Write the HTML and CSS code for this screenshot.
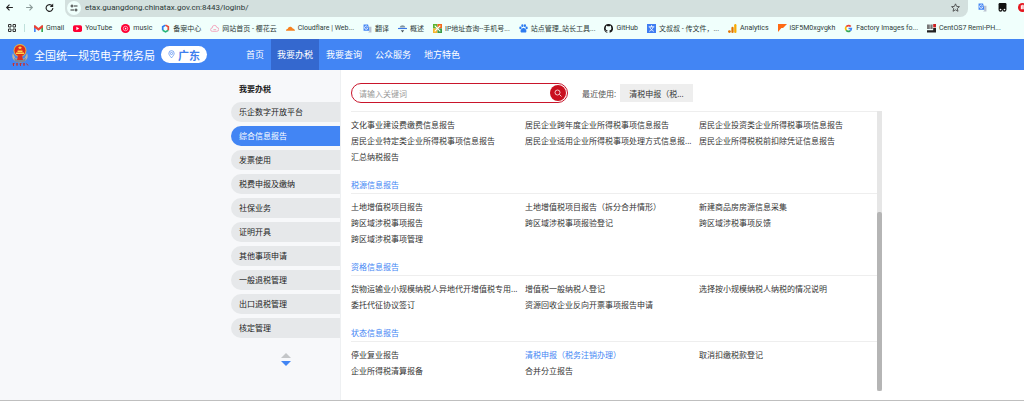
FILE: index.html
```html
<!DOCTYPE html>
<html lang="zh-CN">
<head>
    <meta charset="UTF-8">
    <meta name="viewport" content="width=device-width, initial-scale=1.0">
    <title>全国统一规范电子税务局</title>
    <link rel="stylesheet" href="styles.css">
</head>
<body>

    <!-- 浏览器地址栏 -->
    <div class="toolbar">
        <button class="icon-btn" aria-label="后退"><svg viewBox="0 0 16 16"><path d="M14 8H3M8 3L3 8l5 5" fill="none" stroke="#222" stroke-width="2"/></svg></button>
        <button class="icon-btn" aria-label="前进"><svg viewBox="0 0 16 16"><path d="M2 8h11M8 3l5 5-5 5" fill="none" stroke="#8a9a98" stroke-width="2"/></svg></button>
        <button class="icon-btn" aria-label="刷新"><svg viewBox="0 0 16 16"><path d="M13 5.500A6 6 0 1 0 14 9" fill="none" stroke="#222" stroke-width="2"/><path d="M14.500 1v6h-6z" fill="#222"/></svg></button>
        <div class="omnibox">
            <button class="site-info" aria-label="网站信息"><svg viewBox="0 0 16 16"><g fill="none" stroke="#333" stroke-width="2"><circle cx="4" cy="4" r="2"/><path d="M8 4h7M1 12h7"/><circle cx="12" cy="12" r="2"/></g></svg></button>
            <input class="url" type="text" aria-label="地址" value="etax.guangdong.chinatax.gov.cn:8443/loginb/">
            <button class="icon-btn" aria-label="收藏"><svg viewBox="0 0 16 16"><path d="M8 1.500l2 4.500 5 .500-3.800 3.300 1.200 4.900L8 12.100l-4.400 2.600 1.200-4.900L1 6.500 6 6z" fill="none" stroke="#444" stroke-width="1.500"/></svg></button>
        </div>
        <div class="extensions">
            <svg viewBox="0 0 16 16"><path d="M1 1h8l3 11H1z" fill="#4285f4"/><path d="M10 5h5v10H9l3-3z" fill="#b9c1d0"/><path d="M8 4.500a3 3 0 1 0 0 4V7H6" fill="none" stroke="#fff" stroke-width="1.500"/></svg>
            <svg viewBox="0 0 16 16"><rect x="1" width="14" height="12" rx="2" fill="#111"/><circle cx="4.500" cy="12" r="3.500" fill="#111"/><circle cx="11.500" cy="12" r="3.500" fill="#111"/><circle cx="4.500" cy="11.500" r="1.500" fill="#fff"/><circle cx="11.500" cy="11.500" r="1.500" fill="#fff"/></svg>
            <svg viewBox="0 0 16 16"><circle cx="8" cy="8" r="8" fill="#e5171f"/><path d="M6 4v7M8.500 3v8M11 4v7" stroke="#fff" stroke-width="2"/></svg>
        </div>
    </div>

    <!-- 书签栏 -->
    <nav class="bookmarks">
        <button class="icon-btn apps" aria-label="应用"><svg viewBox="0 0 16 16"><path d="M1 1h5v5H1zM10 1h5v5h-5zM1 10h5v5H1zM10 10h5v5h-5z" fill="none" stroke="#333" stroke-width="2"/></svg></button>
        <a href="#"><svg viewBox="0 0 16 16"><path d="M0 3h3v11H0z" fill="#4285f4"/><path d="M13 3h3v11h-3z" fill="#34a853"/><path d="M0 2h2l6 5 6-5h2v4l-8 6-8-6z" fill="#ea4335"/></svg>Gmail</a>
        <a href="#"><svg viewBox="0 0 16 16"><rect y="2" width="16" height="12" rx="3" fill="#f03"/><path d="M6 5l5 3-5 3z" fill="#fff"/></svg>YouTube</a>
        <a href="#"><svg viewBox="0 0 16 16"><circle cx="8" cy="8" r="8" fill="#f03"/><circle cx="8" cy="8" r="4" fill="none" stroke="#fff"/><path d="M7 6l3 2-3 2z" fill="#fff"/></svg>music</a>
        <a href="#"><svg viewBox="0 0 16 16"><g fill="none" stroke-width="3"><path d="M8 2L3 5v6" stroke="#2d7ff0"/><path d="M3 11l5 3 5-3" stroke="#27b67a"/><path d="M13 11V5L8 2" stroke="#e84b3c"/></g></svg>备案中心</a>
        <a href="#"><svg viewBox="0 0 16 16"><path d="M4 13a3 3 0 0 1 0-6 4 4 0 0 1 8-1 3.500 3.500 0 0 1 0 7zM6 10h5" fill="none" stroke="#f39ab5" stroke-width="1.500"/></svg>网站首页 - 樱花云</a>
        <a href="#"><svg viewBox="0 0 16 16"><path d="M0 12c0-2 1-3 3-3 0-5 7-6 9-1 2 0 4 2 4 4z" fill="#f6821f"/></svg>Cloudflare | Web...</a>
        <a href="#"><svg viewBox="0 0 16 16"><path d="M1 1h8l3 11H1z" fill="#4285f4"/><path d="M10 5h5v10H9l3-3z" fill="#b9c1d0"/><path d="M8 4.500a3 3 0 1 0 0 4V7H6" fill="none" stroke="#fff" stroke-width="1.500"/></svg>翻译</a>
        <a href="#"><svg viewBox="0 0 16 16"><path d="M3 6c1-5 9-5 10 0z" fill="#8295a0"/><path d="M0 8h16" stroke="#3b78e7" stroke-width="2"/><path d="M5 11h6l-3 4z" fill="#44525c"/></svg>概述</a>
        <a href="#"><svg viewBox="0 0 16 16"><path d="M0 0h8v8H0z" fill="#5bb531"/><path d="M8 0h8v8H8z" fill="#f36a1d"/><path d="M0 8h8v8H0z" fill="#f7b52b"/><path d="M8 8h8v8H8z" fill="#3c9c49"/><path d="M3 3l10 10M13 3L3 13" stroke="#fff" stroke-width="2"/></svg>IP地址查询--手机号...</a>
        <a href="#"><svg viewBox="0 0 16 16"><g fill="#2e7cf0"><ellipse cx="2.500" cy="7" rx="2" ry="2.500"/><ellipse cx="6" cy="3" rx="2" ry="2.500"/><ellipse cx="10.500" cy="3" rx="2" ry="2.500"/><ellipse cx="13.500" cy="7" rx="2" ry="2.500"/><path d="M8 7c3 0 6 4 5 7-1 2-3 1-5 1s-4 1-5-1c-1-3 2-7 5-7z"/></g></svg>站点管理_站长工具...</a>
        <a href="#"><svg viewBox="0 0 16 16"><path fill="#181717" d="M8 0C3.580 0 0 3.580 0 8c0 3.540 2.290 6.530 5.470 7.590.4.070.550-.170.550-.380v-1.490c-2.230.480-2.700-.950-2.700-.950-.360-.920-.890-1.170-.890-1.170-.730-.500.060-.490.060-.490.800.060 1.230.830 1.230.830.710 1.220 1.870.870 2.330.660.070-.520.280-.870.510-1.070-1.780-.200-3.640-.890-3.640-3.950 0-.870.310-1.590.820-2.150-.080-.200-.360-1.020.080-2.120 0 0 .670-.210 2.200.820a7.600 7.600 0 0 1 4 0c1.530-1.040 2.200-.820 2.200-.820.440 1.100.160 1.920.080 2.120.510.560.820 1.270.820 2.150 0 3.070-1.870 3.750-3.650 3.950.290.250.540.730.540 1.480v2.200c0 .210.150.460.550.380A8 8 0 0 0 8 0z"/></svg>GitHub</a>
        <a href="#"><svg viewBox="0 0 16 16"><path d="M0 0h16v16H0z" fill="#3f7df2"/><path d="M3 5h10M8 2v3M5 5c1 4 3 6 7 8M11 5c-1 4-3 6-7 8" fill="none" stroke="#fff" stroke-width="1.500"/></svg>文叔叔 - 传文件，...</a>
        <a href="#"><svg viewBox="0 0 16 16"><rect x="11" width="4" height="16" rx="2" fill="#f9ab00"/><rect x="6" y="5" width="4" height="11" rx="2" fill="#e37400"/><circle cx="2.500" cy="13.500" r="2.500" fill="#e37400"/></svg>Analytics</a>
        <a href="#"><svg viewBox="0 0 16 16"><path d="M0 0h16L9 7H6l-6 7z" fill="#ff6a13"/></svg>iSF5M0xgvgkh</a>
        <a href="#"><svg viewBox="0 0 16 16"><g fill="none" stroke-width="3"><path d="M12 4.500A5 5 0 0 0 4 5" stroke="#ea4335"/><path d="M4 5a5 5 0 0 0 0 6" stroke="#fbbc05"/><path d="M4 11a5 5 0 0 0 7 1" stroke="#34a853"/><path d="M11 12a5 5 0 0 0 2-4H8" stroke="#4285f4"/></g></svg>Factory Images fo...</a>
        <a href="#"><svg viewBox="0 0 16 16"><path d="M0 1h5v8H0zM6 1h4v8H6z" fill="#777"/><path d="M11 0h5v6h-5z" fill="#c22"/><path d="M0 11h16v4H0zM11 7h5v4h-5z" fill="#222"/></svg>CentOS7 Remi-PH...</a>
    </nav>

    <header class="site-header">
        <svg class="emblem" viewBox="0 0 36 48">
            <path d="M4 20c-4 8 0 18 14 19 14-1 18-11 14-19l-5 11H9z" fill="#b9b3a4"/>
            <path d="M6 30q12 8 24 0l-2 7q-10 4-20 0z" fill="#7c8797"/>
            <circle cx="18" cy="15" r="13" fill="#e8b23c"/>
            <circle cx="18" cy="15" r="11" fill="#dc2a1e"/>
            <path d="M18 5l1 3h3l-2 2 1 3-3-2-3 2 1-3-2-2h3zM10 19h16v3H10zM13 15h10v3H13z" fill="#ffd54a"/>
            <path d="M14 25h8l2 9H12z" fill="#d63226"/>
            <path d="M3 42l4-1M5 40v6M10 42h4M12 40v6M17 42l4-1M19 40v6M24 42h4M26 40v6M31 41l3 4" stroke="#c9302c" stroke-width="2"/>
        </svg>
        <h1>全国统一规范电子税务局</h1>
        <button class="region"><svg viewBox="0 0 16 20"><path d="M8 18C4 13 2 11 2 7.500a6 6 0 0 1 12 0C14 11 12 13 8 18z" fill="none" stroke="#3f7fee" stroke-width="1.500"/><circle cx="8" cy="8" r="2.500" fill="none" stroke="#3f7fee" stroke-width="1.500"/></svg>广东</button>
        <nav class="main-nav">
            <a href="#">首页</a>
            <a href="#" class="active">我要办税</a>
            <a href="#">我要查询</a>
            <a href="#">公众服务</a>
            <a href="#">地方特色</a>
        </nav>
    </header>

    <main class="page">
        <aside class="sidebar">
            <h2>我要办税</h2>
            <a href="#">乐企数字开放平台</a>
            <a href="#" class="active">综合信息报告</a>
            <a href="#">发票使用</a>
            <a href="#">税费申报及缴纳</a>
            <a href="#">社保业务</a>
            <a href="#">证明开具</a>
            <a href="#">其他事项申请</a>
            <a href="#">一般退税管理</a>
            <a href="#">出口退税管理</a>
            <a href="#">核定管理</a>
            <div class="pager">
                <button class="up" aria-label="上一页"></button>
                <button class="down" aria-label="下一页"></button>
            </div>
        </aside>

        <section class="content">
            <div class="search-row">
                <form class="search">
                    <input type="text" placeholder="请输入关键词" aria-label="关键词">
                    <button type="button" aria-label="搜索"><svg viewBox="0 0 16 16"><g fill="none" stroke="#fff" stroke-width="1.500"><circle cx="7" cy="7" r="5"/><path d="M11 11l4 4"/></g></svg></button>
                </form>
                <span class="recent">最近使用:</span>
                <button class="recent-item">清税申报（税...</button>
            </div>

            <div class="scroll-area">
                <div class="groups">
                    <div class="links">
                        <a href="#">文化事业建设费缴费信息报告</a>
                        <a href="#">居民企业跨年度企业所得税事项信息报告</a>
                        <a href="#">居民企业投资类企业所得税事项信息报告</a>
                        <a href="#">居民企业特定类企业所得税事项信息报告</a>
                        <a href="#">居民企业适用企业所得税事项处理方式信息报...</a>
                        <a href="#">居民企业所得税税前扣除凭证信息报告</a>
                        <a href="#">汇总纳税报告</a>
                    </div>
                    <h3>税源信息报告</h3>
                    <div class="links">
                        <a href="#">土地增值税项目报告</a>
                        <a href="#">土地增值税项目报告（拆分合并情形）</a>
                        <a href="#">新建商品房房源信息采集</a>
                        <a href="#">跨区域涉税事项报告</a>
                        <a href="#">跨区域涉税事项报验登记</a>
                        <a href="#">跨区域涉税事项反馈</a>
                        <a href="#">跨区域涉税事项管理</a>
                    </div>
                    <h3>资格信息报告</h3>
                    <div class="links">
                        <a href="#">货物运输业小规模纳税人异地代开增值税专用...</a>
                        <a href="#">增值税一般纳税人登记</a>
                        <a href="#">选择按小规模纳税人纳税的情况说明</a>
                        <a href="#">委托代征协议签订</a>
                        <a href="#">资源回收企业反向开票事项报告申请</a>
                    </div>
                    <h3>状态信息报告</h3>
                    <div class="links">
                        <a href="#">停业复业报告</a>
                        <a href="#" class="current">清税申报（税务注销办理）</a>
                        <a href="#">取消扣缴税款登记</a>
                        <a href="#">企业所得税清算报备</a>
                        <a href="#">合并分立报告</a>
                    </div>
                </div>
                <div class="track"><div class="thumb"></div></div>
            </div>
        </section>
    </main>

</body>
</html>
```

FILE: styles.css
```css
* {
    box-sizing: border-box;
}

body {
    margin: 0;
    min-height: 100vh;
    display: flex;
    flex-direction: column;
    font-family: "Noto Sans", "Noto Sans CJK SC", sans-serif;
    font-size: 8px;
    color: #333;
    background: #fff;
    overflow: hidden;
}

a {
    color: inherit;
    text-decoration: none;
    white-space: nowrap;
}

button {
    border: none;
    padding: 0;
    background: none;
    font-family: inherit;
    color: inherit;
    cursor: pointer;
}

svg {
    display: block;
    flex-shrink: 0;
}

/* 浏览器 */
.toolbar {
    display: flex;
    align-items: center;
    height: 17px;
    padding: 0 0 2px 5px;
    background: #f0fffc;
}

.icon-btn {
    width: 9px;
    flex-shrink: 0;
}

.toolbar > .icon-btn {
    margin-right: 11px;
}

.omnibox {
    flex: 1;
    display: flex;
    align-items: center;
    height: 17px;
    margin-bottom: -2px;
    padding: 0 8px 2px 2px;
    border-radius: 0 0 8px 8px;
    background: #d3e0de;
}

.site-info {
    width: 14px;
    height: 14px;
    padding: 3px;
    border-radius: 50%;
    background: #f0fffc;
}

.url {
    flex: 1;
    border: none;
    padding: 0 0 0 4px;
    background: none;
    font-family: Roboto, sans-serif;
    font-size: 8px;
    color: #2b3836;
}

.extensions {
    display: flex;
    gap: 11px;
    padding-left: 10px;
    width: 56px;
    overflow: hidden;
}

.extensions svg {
    width: 9px;
}

.bookmarks {
    display: flex;
    align-items: center;
    gap: 9px;
    height: 22px;
    padding-left: 8px;
    background: #f0fffc;
    font-family: Roboto, "Noto Sans CJK SC", sans-serif;
    font-size: 7px;
    color: #2e3b39;
    overflow: hidden;
}

.bookmarks a {
    display: flex;
    align-items: center;
    gap: 3px;
}

.bookmarks a svg {
    width: 9px;
}

.apps {
    width: 17px;
    padding-right: 8px;
    border-right: 1px solid #bfe0db;
}

/* 页头 */
.site-header {
    display: flex;
    align-items: center;
    height: 31px;
    padding-left: 11px;
    background: #4285f4;
    color: #fff;
}

.emblem {
    width: 18px;
    margin-right: 5px;
}

h1 {
    margin: 0 6px 0 0;
    font-size: 11px;
    font-weight: 400;
    white-space: nowrap;
}

.region {
    display: flex;
    align-items: center;
    justify-content: center;
    gap: 3px;
    width: 46px;
    height: 17px;
    border-radius: 9px;
    background: #fff;
    color: #3f7fee;
    font-size: 11px;
    font-weight: 700;
}

.region svg {
    width: 7px;
}

.main-nav {
    display: flex;
    align-self: stretch;
    gap: 1px;
    margin-left: 33px;
    font-size: 9px;
}

.main-nav a {
    display: flex;
    align-items: center;
    padding: 0 6px;
}

.main-nav a.active {
    background: #3468cf;
}

/* 主体 */
.page {
    flex: 1;
    display: flex;
    border-bottom: 2px solid #bfbfbf;
}

.sidebar {
    width: 341px;
    padding: 12px 0 0 231px;
    background: #f7f8fa;
    border-right: 1px solid #eef0f2;
    color: #222;
}

.sidebar h2 {
    margin: 0 0 6px;
    padding-left: 8px;
    font-size: 8px;
    line-height: 14px;
}

.sidebar a {
    display: block;
    margin-bottom: 4px;
    padding-left: 8px;
    border-radius: 10px 0 0 10px;
    background: #e6e8ea;
    line-height: 20px;
}

.sidebar a.active {
    background: #4285f4;
    color: #fff;
}

.pager {
    display: flex;
    flex-direction: column;
    align-items: center;
    gap: 3px;
    padding-top: 11px;
}

.pager button {
    border-left: 5px solid transparent;
    border-right: 5px solid transparent;
}

.pager .up {
    border-bottom: 5px solid #c4c6c8;
}

.pager .down {
    border-top: 5px solid #4285f4;
}

.content {
    flex: 1;
    padding: 13px 0 9px 10px;
}

.search-row {
    display: flex;
    align-items: center;
    margin-bottom: 8px;
}

.search {
    display: flex;
    align-items: center;
    width: 217px;
    height: 20px;
    padding: 0 1px 0 7px;
    border: 1px solid #c9152b;
    border-radius: 10px;
}

.search input {
    flex: 1;
    border: none;
    padding: 0;
    font-family: inherit;
    font-size: 8px;
}

.search input::placeholder {
    color: #999;
}

.search button {
    width: 16px;
    height: 16px;
    padding: 4px;
    border-radius: 50%;
    background: #c9101f;
}

.recent {
    margin: 0 4px 0 14px;
    color: #555;
}

.recent-item {
    height: 18px;
    padding: 0 9px;
    background: #eee;
    font-size: 8px;
}

.scroll-area {
    display: flex;
    width: 531px;
}

.groups {
    flex: 1;
    border-top: 1px solid #eee;
    padding-bottom: 12px;
}

.links {
    display: grid;
    grid-template-columns: repeat(3, 174px);
    padding-top: 5px;
    line-height: 16px;
}

.groups h3 {
    margin: 12px 0 0;
    border-bottom: 1px solid #eee;
    color: #4285f4;
    font-size: 8px;
    font-weight: 400;
    line-height: 16px;
}

.links .current {
    color: #4285f4;
}

.track {
    display: flex;
    flex-direction: column;
    justify-content: flex-end;
    width: 5px;
    background: #e6e6e6;
}

.thumb {
    height: 64%;
    border-radius: 2px;
    background: #b5b5b5;
}
```
